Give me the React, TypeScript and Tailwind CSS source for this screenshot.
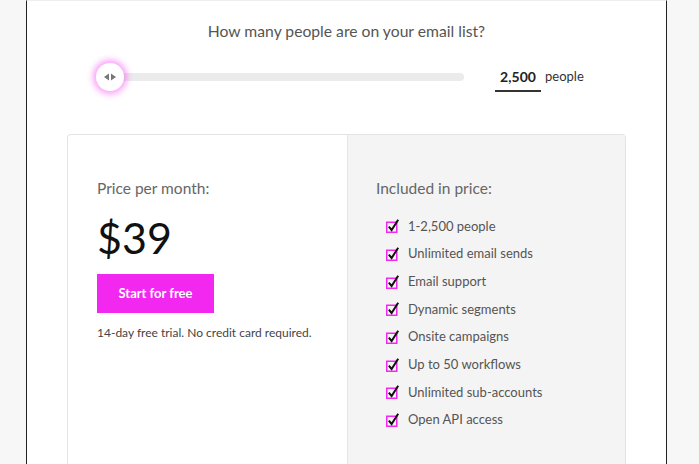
const features = [
  '1-2,500 people',
  'Unlimited email sends',
  'Email support',
  'Dynamic segments',
  'Onsite campaigns',
  'Up to 50 workflows',
  'Unlimited sub-accounts',
  'Open API access',
];

function CheckBox() {
  return (
    <svg width="16" height="16" viewBox="0 0 16 16" className="shrink-0">
      <rect x="1.75" y="4.25" width="10" height="10" fill="#f4f4f4" stroke="#f227f0" strokeWidth="1.5" />
      <path d="M3.8 8.6 L6.6 12 L13.2 1.8" fill="none" stroke="#111" strokeWidth="2" />
    </svg>
  );
}

function ThumbArrows() {
  return (
    <svg width="14" height="8" viewBox="0 0 14 8">
      <path d="M6 0.5 L6 7.5 L1 4 Z" fill="#777" />
      <path d="M8 0.5 L8 7.5 L13 4 Z" fill="#777" />
    </svg>
  );
}

export default function App() {
  return (
    <div
      className="flex h-[464px] w-[699px] overflow-hidden bg-[#f7f7f7]"
      style={{ fontFamily: 'Lato, "Noto Sans", sans-serif' }}
    >
      <div className="ml-[26px] flex w-[641px] flex-col border-x border-t border-x-[#222] border-t-[#eee] bg-white">
        <p className="mt-[19px] text-center text-[15.7px] text-[#555]">
          How many people are on your email list?
        </p>

        <div className="mt-[19px] flex items-center">
          <div className="relative ml-[69px] h-[8px] w-[368px] rounded-full bg-[#ebebeb]">
            <div className="absolute left-0 top-1/2 flex h-[28px] w-[28px] -translate-y-1/2 items-center justify-center rounded-full bg-white shadow-[0_0_6px_3px_rgba(242,39,240,0.45)]">
              <ThumbArrows />
            </div>
          </div>
          <div className="ml-[31px] w-[46px] border-b-2 border-[#333] pb-[3px] pt-[3px] text-center text-[14px] font-bold text-[#222]">
            2,500
          </div>
          <span className="ml-[4px] text-[13px] text-[#333]">people</span>
        </div>

        <div className="ml-[40px] mt-[42px] flex w-[559px] flex-1 rounded-t-[4px] border border-b-0 border-[#e3e3e3]">
          <div className="w-[279px] pl-[29px] pt-[42px]">
            <p className="text-[15.5px] text-[#666]">Price per month:</p>
            <p className="mt-[12px] text-[43px] font-normal leading-[52px] text-[#111]">$39</p>
            <button className="mt-[10px] h-[39px] w-[117px] bg-[#f227f0] text-[13px] font-bold text-white">
              Start for free
            </button>
            <p className="mt-[11px] text-[12px] text-[#444]">14-day free trial. No credit card required.</p>
          </div>
          <div className="flex-1 border-l border-[#e6e6e6] bg-[#f4f4f4] pl-[28px] pt-[42px]">
            <p className="text-[15.5px] text-[#666]">Included in price:</p>
            <ul className="mt-[17px] flex flex-col gap-[8.7px] pl-[9px]">
              {features.map((f) => (
                <li key={f} className="flex h-[19px] items-center gap-[7px] text-[13px] text-[#555]">
                  <CheckBox />
                  <span>{f}</span>
                </li>
              ))}
            </ul>
          </div>
        </div>
      </div>
    </div>
  );
}
